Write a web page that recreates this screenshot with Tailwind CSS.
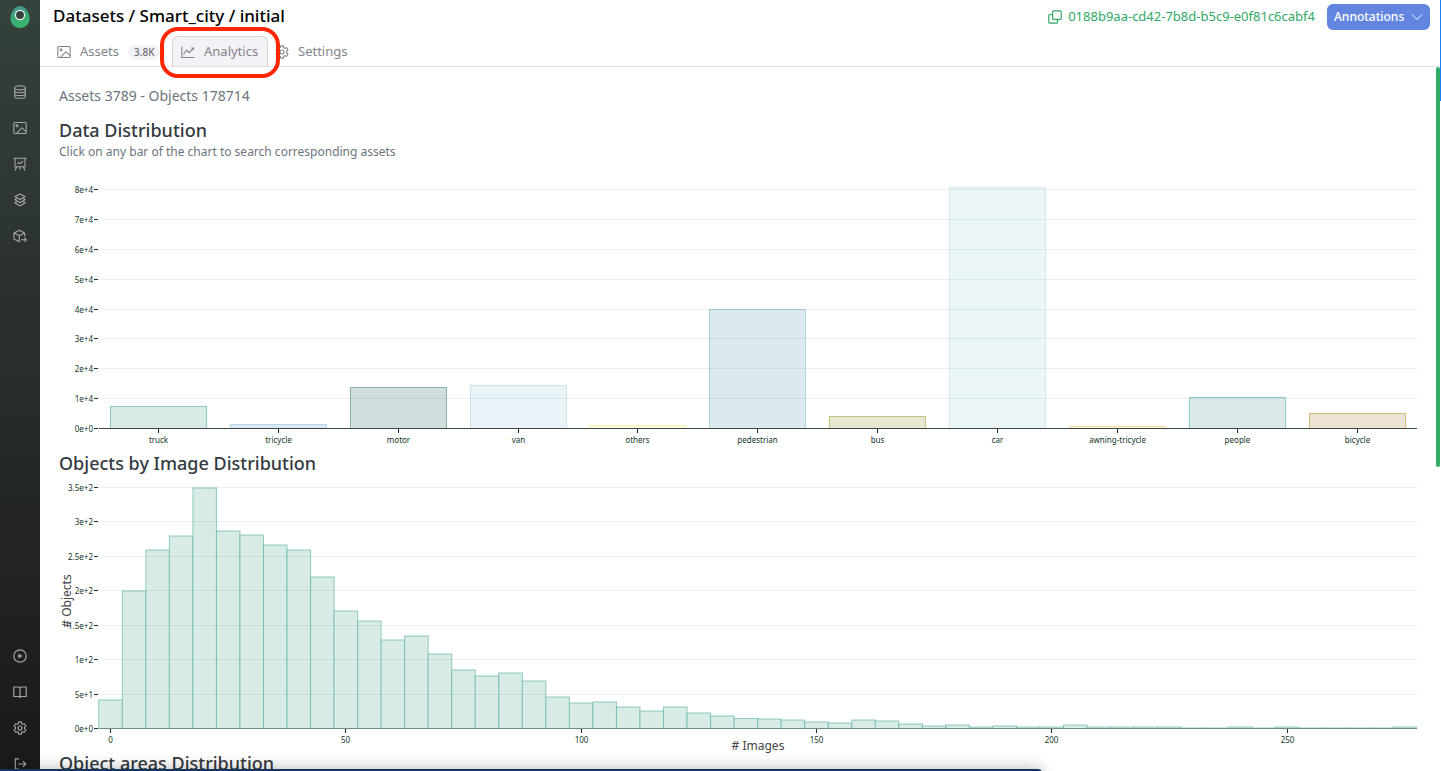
<!DOCTYPE html>
<html lang="en">
<head>
<meta charset="utf-8">
<meta name="viewport" content="width=device-width, initial-scale=1">
<title>Smart_city analytics</title>
<script src="https://cdn.jsdelivr.net/npm/@tailwindcss/browser@4"></script>
</head>
<body class="relative flex h-screen overflow-hidden bg-white font-['Noto_Sans','Open_Sans',sans-serif] text-[#6c757d]">

<aside class="flex w-10 shrink-0 flex-col items-center bg-linear-to-b from-[#35413b] to-[#1a1a19] text-[#a3a8a5]">
  <a href="#" aria-label="Home" class="flex h-[34px] items-center">
    <svg class="h-[22px] w-5" viewBox="0 0 20 22" fill="none">
      <defs><linearGradient id="logo" x1="0" y1="0" x2=".3" y2="1"><stop offset="0" stop-color="#4d8f9c"/><stop offset=".6" stop-color="#37a873"/><stop offset="1" stop-color="#3bb56c"/></linearGradient></defs>
      <path d="M10 0C15 0 19.500 6 19.500 12.500C19.500 18.500 15 22 10 22S.5 18.500.5 12.500C.5 6 5 0 10 0Z" fill="url(#logo)"/>
      <circle cx="10" cy="9" r="4.600" fill="#35413b" stroke="#e9f3ee" stroke-width="1.300"/>
    </svg>
  </a>
  <nav aria-label="Primary" class="mt-10 flex flex-col">
    <a href="#" aria-label="Datasets" class="flex size-9 items-center justify-center"><svg class="size-3.5" viewBox="0 0 14 14" fill="none" stroke="currentColor" stroke-width="1.100"><ellipse cx="7" cy="2.800" rx="5.300" ry="2.100"/><path d="M1.700 2.800v8.400c0 1.200 2.400 2.100 5.300 2.100s5.300-.9 5.300-2.100V2.800M1.700 5.600C1.700 6.800 4.100 7.700 7 7.700s5.300-.9 5.300-2.100M1.700 8.400c0 1.200 2.400 2.100 5.300 2.100s5.300-.9 5.300-2.100"/></svg></a>
    <a href="#" aria-label="Images" class="flex size-9 items-center justify-center"><svg class="size-3.5" viewBox="0 0 14 14" fill="none" stroke="currentColor" stroke-width="1.100"><rect x=".8" y="1.500" width="12.400" height="11" rx="1"/><circle cx="4" cy="4.800" r="1"/><path d="M3.500 12.400L8.800 6.700l4.300 4"/></svg></a>
    <a href="#" aria-label="Experiments" class="flex size-9 items-center justify-center"><svg class="size-3.5" viewBox="0 0 14 14" fill="none" stroke="currentColor" stroke-width="1.100"><path d="M.5 1.300h13M2 1.500v8.200h10V1.500M4.300 7.200l1.700-1.800 1.500 1.200 2.400-2.500M3.800 9.800L2 13.500M10.200 9.800l1.800 3.700M7 9.800v3"/></svg></a>
    <a href="#" aria-label="Models" class="flex size-9 items-center justify-center"><svg class="size-3.5" viewBox="0 0 14 14" fill="none" stroke="currentColor" stroke-width="1.100" stroke-linejoin="round"><path d="M7 1l5.200 2.700L7 6.400 1.800 3.700zM3.800 5.600L1.800 6.800 7 9.500l5.200-2.700-2-1.200M3.800 8.700L1.800 10 7 12.800 12.200 10l-2-1.300"/></svg></a>
    <a href="#" aria-label="Deployments" class="flex size-9 items-center justify-center"><svg class="size-3.5" viewBox="0 0 14 14" fill="none" stroke="currentColor" stroke-width="1.100" stroke-linejoin="round"><path d="M11.600 7.500V4L6.300 1.200 1 4v6l5.300 2.800V6.700M1 4l5.300 2.700L11.600 4M8 10.800h5.300M11.500 9l1.800 1.800-1.800 1.800"/></svg></a>
  </nav>
  <nav aria-label="Secondary" class="mt-auto -mb-[11px] flex flex-col">
    <a href="#" aria-label="Tutorials" class="flex size-9 items-center justify-center"><svg class="size-3.5" viewBox="0 0 14 14" fill="none" stroke="currentColor" stroke-width="1.200"><circle cx="7" cy="7" r="6.200"/><path d="M5.300 4.500L9.600 7 5.300 9.500z" fill="currentColor" stroke="none"/></svg></a>
    <a href="#" aria-label="Documentation" class="flex size-9 items-center justify-center"><svg class="size-3.5" viewBox="0 0 14 14" fill="none" stroke="currentColor" stroke-width="1.200" stroke-linejoin="round"><path d="M7 3v9.500M7 3C6.600 2.300 6 2 5.200 2H.8v9.500h4.600c.9 0 1.600.4 1.600 1 0-.6.7-1 1.600-1h4.600V2H8.800C8 2 7.400 2.300 7 3z"/></svg></a>
    <a href="#" aria-label="Settings" class="flex size-9 items-center justify-center"><svg class="size-3.5" viewBox="0 0 14 14" fill="none" stroke="currentColor" stroke-width="1.100" stroke-linejoin="round"><path d="M5.700.9h2.600l.4 1.800 1.100.6 1.800-.6 1.300 2.300L11.500 6.300v1.400l1.400 1.300-1.300 2.300-1.800-.6-1.100.6-.4 1.800H5.700l-.4-1.800-1.100-.6-1.800.6L1.100 9l1.400-1.300V6.300L1.100 5l1.300-2.300 1.800.6 1.100-.6z"/><circle cx="7" cy="7" r="2"/></svg></a>
    <a href="#" aria-label="Log out" class="flex size-9 items-center justify-center"><svg class="size-3.5" viewBox="0 0 14 14" fill="none" stroke="currentColor" stroke-width="1.200"><path d="M6 1.800H2.300v10.400H6M5.300 7h7.500M10 4.200L12.800 7 10 9.800"/></svg></a>
  </nav>
</aside>

<main class="flex min-w-0 flex-1 flex-col">
  <header class="shrink-0 border-b border-[#dee2e6]">
    <div class="flex h-[34px] items-center justify-between pr-[11px] pl-[13px]">
      <h1 class="pb-0.5 text-[17px] leading-6 font-medium whitespace-nowrap text-black">Datasets / Smart_city / initial</h1>
      <div class="flex items-center gap-3">
        <button type="button" class="flex items-center gap-1.5 text-[13px] text-[#2fa866]">
          <svg class="size-3.5" viewBox="0 0 14 14" fill="none" stroke="currentColor" stroke-width="1.200"><rect x="4.600" y=".8" width="8.600" height="8.600" rx="1"/><path d="M4.600 4.500H1.800a1 1 0 0 0-1 1v6.700a1 1 0 0 0 1 1h6.700a1 1 0 0 0 1-1V9.400"/></svg>
          <span>0188b9aa-cd42-7b8d-b5c9-e0f81c6cabf4</span>
        </button>
        <button type="button" class="flex h-[26px] w-[103px] items-center justify-between rounded-md bg-[#6286e0] px-[7px] text-xs font-medium text-white">Annotations
          <svg class="size-3" viewBox="0 0 12 12" fill="none" stroke="currentColor"><path d="M1 3.500l5 5 5-5"/></svg>
        </button>
      </div>
    </div>
    <nav aria-label="Dataset sections" class="relative flex h-8 items-end pl-2 text-[13px] text-[#84848a]">
      <a href="#" class="flex h-[30px] w-[124px] items-center pt-0.5 pl-[9px]">
        <svg class="size-3.5" viewBox="0 0 14 14" fill="none" stroke="currentColor" stroke-width="1.100"><rect x=".8" y="1.500" width="12.400" height="11" rx="1"/><circle cx="4" cy="4.800" r="1"/><path d="M3.500 12.400L8.800 6.700l4.300 4"/></svg>
        <span class="ml-[9px] w-12">Assets</span>
        <span class="rounded-full bg-[#f3f2f7] px-1.5 text-[10px] leading-[15px] font-medium text-[#6d6d72]">3.8K</span>
      </a>
      <a href="#" aria-current="page" class="flex h-[30px] w-24 items-center gap-[9px] rounded-t-md border border-b-0 border-[#d5d5dc] bg-[#f3f2f7] pl-2">
        <svg class="size-3.5" viewBox="0 0 14 14" fill="none" stroke="currentColor" stroke-width="1.100"><path d="M.8 1.500v11h12.700M2.500 9.500L5.500 5l2.800 2.700L12.500 3M10 3h2.500v2.300"/></svg>
        <span>Analytics</span>
      </a>
      <a href="#" class="flex h-[30px] items-center gap-[9px] pt-0.5 pl-[7px]">
        <svg class="size-3.5" viewBox="0 0 14 14" fill="none" stroke="currentColor" stroke-width="1.100" stroke-linejoin="round"><path d="M5.700.9h2.600l.4 1.800 1.100.6 1.800-.6 1.300 2.300L11.500 6.300v1.400l1.400 1.300-1.300 2.300-1.800-.6-1.100.6-.4 1.800H5.700l-.4-1.800-1.100-.6-1.800.6L1.100 9l1.400-1.300V6.300L1.100 5l1.300-2.300 1.800.6 1.100-.6z"/><circle cx="7" cy="7" r="2"/></svg>
        <span>Settings</span>
      </a>
      <div class="pointer-events-none absolute -top-[7px] left-[120px] h-[51px] w-[120px] rounded-[18px] border-4 border-[#ff2600]"></div>
    </nav>
  </header>

  <div class="min-h-0 flex-1 overflow-hidden pr-6 pl-[19px]">
    <p class="mt-[19px] text-sm leading-5">Assets 3789 - Objects 178714</p>
    <section class="mt-3">
      <h2 class="text-lg leading-6 font-medium text-[#343a40]">Data Distribution</h2>
      <p class="text-xs leading-5">Click on any bar of the chart to search corresponding assets</p>
      <svg id="classes" class="mt-2.5 block w-full" viewBox="0 0 1358 279" role="img" aria-label="Objects per class"></svg>
    </section>
    <section>
      <h2 class="text-lg leading-6 font-medium text-[#343a40]">Objects by Image Distribution</h2>
      <svg id="counts" class="block w-full overflow-visible" viewBox="0 0 1358 276" role="img" aria-label="Objects by image"></svg>
    </section>
    <section>
      <h2 class="text-lg leading-6 font-medium text-[#343a40]">Object areas Distribution</h2>
    </section>
  </div>
</main>

<div class="absolute top-[67px] right-px h-[400px] w-1 rounded-full bg-[#34ad67]"></div>
<div class="absolute top-0 right-0 h-[101px] w-px bg-[#1a7ff0]"></div>
<div class="absolute -bottom-[38px] left-0 h-10 w-[1042px] rounded-tr-sm bg-[#12365f] shadow-[0_0_16px_rgba(0,0,0,0.3)]"></div>

<script>
const NS = 'http://www.w3.org/2000/svg';
function add(svg, tag, attrs, text) {
  const el = document.createElementNS(NS, tag);
  for (const k in attrs) el.setAttribute(k, attrs[k]);
  if (text) el.textContent = text;
  svg.appendChild(el);
}
const LEFT = 40, RIGHT = 1358, INK = '#12352b';
function yAxis(svg, labels, base, step) {
  labels.forEach((t, i) => {
    const y = Math.round(base - i * step) + 0.5;
    if (i) add(svg, 'line', {x1: LEFT, x2: RIGHT, y1: y, y2: y, stroke: '#00281e', 'stroke-opacity': 0.07});
    add(svg, 'line', {x1: 35, x2: 39, y1: y, y2: y, stroke: INK});
    add(svg, 'text', {x: 34, y: y + 3, 'text-anchor': 'end', 'font-size': 8, fill: INK}, t);
  });
}
function xTick(svg, x, y, label) {
  add(svg, 'line', {x1: x, x2: x, y1: y + 1, y2: y + 5, stroke: INK});
  add(svg, 'text', {x: x, y: y + 15, 'text-anchor': 'middle', 'font-size': 8, fill: INK}, label);
}

// Objects per class: label, bar height, fill, outline
const classes = [
  ['truck', 22, '#d8ebe7', '#8fcbc1'], ['tricycle', 4, '#dceaf3', '#b3d9e8'],
  ['motor', 41, '#d0dfdd', '#88b3aa'], ['van', 43, '#eaf4f8', '#c8e6ea'],
  ['others', 3, '#fdfbe2', '#f3efae'], ['pedestrian', 119, '#dce9ef', '#aed3da'],
  ['bus', 12, '#e8e7d2', '#c2c281'], ['car', 241, '#edf6f7', '#d3ebed'],
  ['awning-tricycle', 2, '#fff3dc', '#f5dba0'], ['people', 31, '#d9eae9', '#95c9cc'],
  ['bicycle', 15, '#ede4d3', '#d1ba7c']
];
const c1 = document.getElementById('classes'), B1 = 256;
classes.forEach(([n, h, f, s], i) => {
  const x = Math.round(51 + i * 119.85) + 0.5;
  add(c1, 'rect', {x, y: B1 - h + 0.5, width: 96, height: h, fill: f, stroke: s});
});
yAxis(c1, ['0e+0', '1e+4', '2e+4', '3e+4', '4e+4', '5e+4', '6e+4', '7e+4', '8e+4'], B1, 29.85);
add(c1, 'line', {x1: LEFT, x2: RIGHT, y1: B1 + 0.5, y2: B1 + 0.5, stroke: '#3c4644'});
classes.forEach(([n], i) => xTick(c1, Math.round(99 + i * 119.85) + 0.5, B1, n));

// Histogram of object counts, bins of 5
const bins = [28, 137, 178, 192, 240, 197, 193, 183, 178, 151, 117, 107, 88, 92, 74, 58, 52, 55, 47, 31,
  25, 26, 21, 17, 21, 15, 12, 9.500, 9, 8, 6, 5, 8, 7, 4, 2, 3, 1, 2, 1,
  1, 3, 1, 1, 1, 1, 0, 0, 1, 0, 1, 0, 0, 0, 0, 1];
const c2 = document.getElementById('counts'), B2 = 253;
bins.forEach((h, i) => {
  const x = 39.8 + i * 23.53, w = Math.min(23.53, RIGHT - x);
  add(c2, 'rect', {x, y: B2 - h, width: w, height: h + 0.5, fill: '#d8ebe7', stroke: '#4faf9f', 'stroke-opacity': 0.6});
});
yAxis(c2, ['0e+0', '5e+1', '1e+2', '1.5e+2', '2e+2', '2.5e+2', '3e+2', '3.5e+2'], B2, 34.5);
add(c2, 'line', {x1: LEFT, x2: RIGHT, y1: B2 + 0.5, y2: B2 + 0.5, stroke: '#6f9089'});
[0, 50, 100, 150, 200, 250].forEach(v => xTick(c2, Math.round(51 + v * 4.706) + 0.5, B2, String(v)));
add(c2, 'text', {x: 699, y: 275, 'text-anchor': 'middle', 'font-size': 12, fill: '#444'}, '# Images');
add(c2, 'text', {x: 12, y: 126, 'text-anchor': 'middle', 'font-size': 12, fill: '#444', transform: 'rotate(-90 12 126)'}, '# Objects');
</script>
</body>
</html>
